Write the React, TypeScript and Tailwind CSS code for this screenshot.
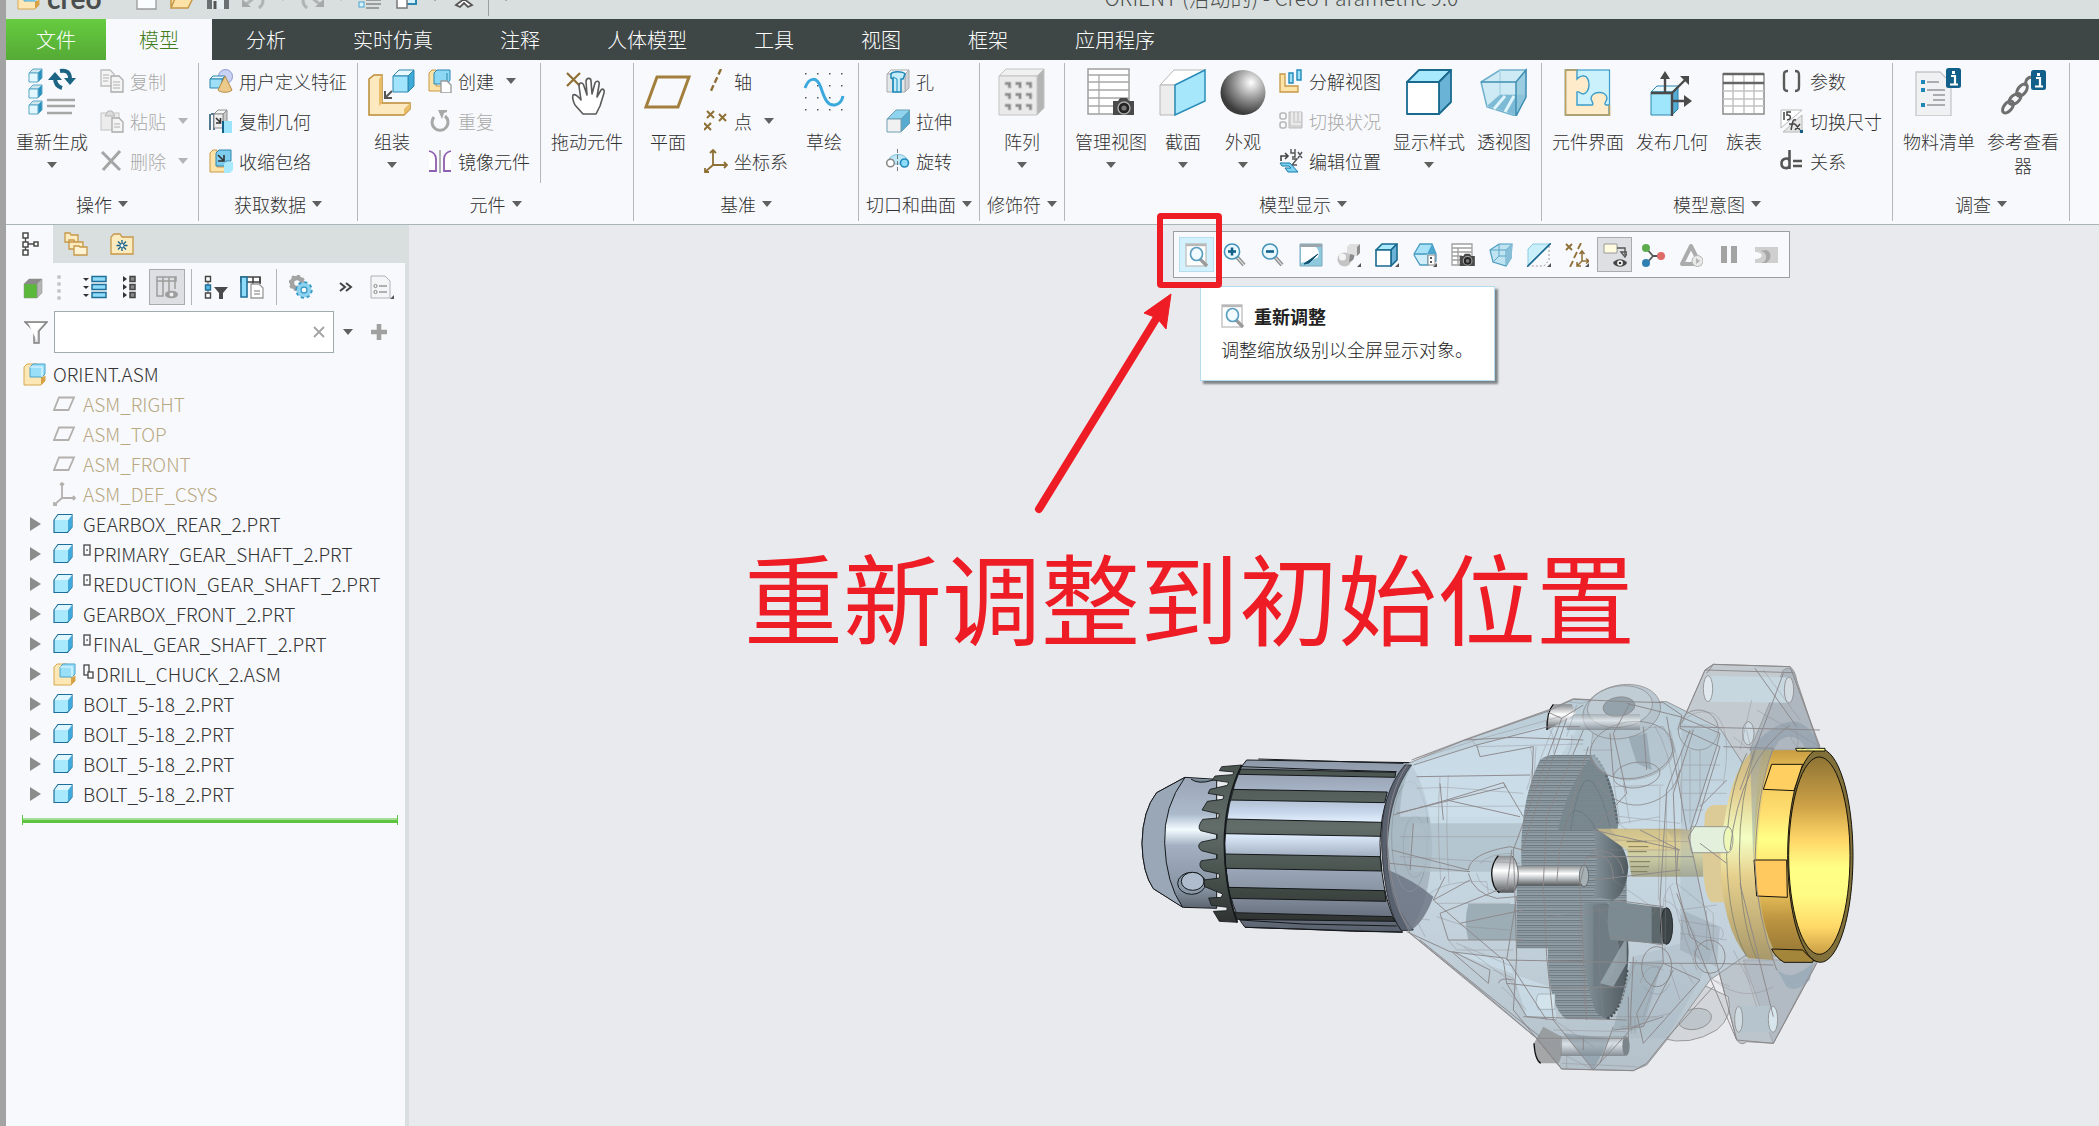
import type { ReactNode } from "react";
import { clsx } from "clsx";

/* ---------- drawing helpers ---------- */

type BoxProps = {
  x: number;
  y: number;
  w: number;
  h: number;
  d: number;
  front?: string;
  top?: string;
  side?: string;
  stroke?: string;
  sw?: number;
};

function Box({ x, y, w, h, d, front = "#a8e6fb", top = "#e8f9ff", side = "#3fa9d8", stroke = "#2b87b0", sw = 1 }: BoxProps) {
  return (
    <g stroke={stroke} strokeWidth={sw} strokeLinejoin="round">
      <path d={`M${x} ${y + d}l${d} ${-d}h${w}l${-d} ${d}z`} fill={top} />
      <path d={`M${x + w} ${y + d}l${d} ${-d}v${h}l${-d} ${d}z`} fill={side} />
      <rect x={x} y={y + d} width={w} height={h} fill={front} />
    </g>
  );
}

function Svg({ s = 24, children }: { s?: 12 | 24 | 48; children: ReactNode }) {
  return (
    <svg
      viewBox={`0 0 ${s} ${s}`}
      className={clsx("shrink-0", s === 48 ? "h-12 w-12" : s === 24 ? "h-6 w-6" : "h-3 w-3")}
      fill="none"
      aria-hidden
    >
      {children}
    </svg>
  );
}

function Caret({ muted }: { muted?: boolean }) {
  return (
    <svg viewBox="0 0 10 6" className={clsx("h-[6px] w-[10px] shrink-0", muted ? "text-[#b4b4b4]" : "text-[#606060]")} aria-hidden>
      <path d="M0 0h10L5 6z" fill="currentColor" />
    </svg>
  );
}

const Page = ({ x, y, w, h, c = "#9a9a9a", f = "#f4f4f4" }: { x: number; y: number; w: number; h: number; c?: string; f?: string }) => (
  <path d={`M${x} ${y}h${w - 4}l4 4v${h - 4}h${-w}z`} fill={f} stroke={c} strokeWidth="1.3" />
);

const Camera = ({ x, y }: { x: number; y: number }) => (
  <g transform={`translate(${x} ${y})`}>
    <path d="M1 4h5l2-3h7l2 3h5v14H1z" fill="#4a4a4a" />
    <circle cx="12" cy="11" r="6" fill="#222" stroke="#aaa" strokeWidth="1.4" />
    <circle cx="12" cy="11" r="2.6" fill="#777" />
  </g>
);

const Lens = ({ glyph }: { glyph?: "+" | "-" }) => (
  <g>
    <path d="M14 14l7 8" stroke="#8d8d8d" strokeWidth="4" />
    <path d="M14 14l7 8" stroke="#d9d9d9" strokeWidth="1.4" />
    <circle cx="9" cy="8.5" r="7.6" fill="#e9f8fe" stroke="#4593b8" strokeWidth="1.5" />
    {glyph && <path d="M5 8.5h8" stroke="#12608a" strokeWidth="2.6" />}
    {glyph === "+" && <path d="M9 4.500v8" stroke="#12608a" strokeWidth="2.6" />}
  </g>
);

const Refit = () => (
  <Svg>
    <rect x="1" y="1" width="20" height="22" fill="#fff" stroke="#c2c2c2" strokeWidth="1.4" />
    <path d="M1 2h20" stroke="#b8b8b8" strokeWidth="2.4" />
    <path d="M15 16l7 7" stroke="#9b9b9b" strokeWidth="3.4" />
    <ellipse cx="11.5" cy="11" rx="6" ry="6.5" fill="#f2fbff" stroke="#5a9fc0" strokeWidth="1.7" />
  </Svg>
);

const AsmIcon = () => (
  <Svg>
    <path d="M1 5l3-3h10v12h8v5l-4 4H1z" fill="#fde7b4" stroke="#d8a850" />
    <path d="M18 23l4-4v-4h-4z" fill="#d8a246" />
    <path d="M7 5l3-3h12v10l-3 3H7z" fill="#9adff8" stroke="#4aa3cc" />
    <path d="M7 5h12v10" stroke="#e6f8ff" strokeWidth="1.2" />
  </Svg>
);

const PartIcon = () => (
  <Svg>
    <path d="M1 8l4-5.500h14v12.500l-4.500 5.500H1z" fill="#a8e9fd" stroke="#1d6f99" strokeWidth="1.200" />
    <path d="M15 8l4-5v12L15 20z" fill="#41a9dc" />
    <path d="M1.500 8l4-5h13.500L15 8z" fill="#ddf6ff" />
  </Svg>
);

const TreePlane = () => (
  <Svg>
    <path d="M6 5.500h15L15.500 18H1z" stroke="#b3b0ae" strokeWidth="1.800" />
  </Svg>
);

const TreeCsys = () => (
  <Svg>
    <path d="M9 1v15h13M9 16l-8 7M7 3l2-2 2 2M20 14l2 2-2 2M1 20v3h3" stroke="#b3b0ae" strokeWidth="1.800" />
  </Svg>
);

/* ---------- ribbon icons, large ---------- */

const RegenerateBig = () => (
  <Svg s={48}>
    {[2, 18, 34].map((y) => (
      <Box key={y} x={1} y={y - 1} w={9} h={9} d={4} front="#e3f7fe" top="#cfe6ef" side="#2a8fbf" stroke="#5aa7c6" />
    ))}
    <path d="M34 20Q27 18 27 10M32 3q10-2 10 8" stroke="#1c6483" strokeWidth="4" />
    <path d="M20 12h14l-7-8zM36 10h12l-6 7z" fill="#1c6483" />
    <path d="M19 32h28M19 38h28M19 45h25" stroke="#a6a6a6" strokeWidth="2.400" />
  </Svg>
);

const AssembleBig = () => (
  <Svg s={48}>
    <path d="M1 11l5-4h8v28h28v6l-6 6H1z" fill="#fde9bf" stroke="#bb8a35" strokeWidth="1.500" />
    <path d="M11 11l3-4v28l-3 3zM36 41l6-6v6l-6 6z" fill="#e9bd68" />
    <Box x={25} y={2} w={15} h={16} d={6} front="#a2e4fb" />
    <path d="M24 23l-6 6M17 23v7h7" stroke="#555" strokeWidth="2" />
  </Svg>
);

const DragBig = () => (
  <Svg s={48}>
    <path d="M4 5l13 13M17 5L4 18" stroke="#8e6f35" strokeWidth="2.200" />
    <path
      d="M20 46l-8-9c-2-4-3-7-2-10 3-2 5 2 8 5l-2-14c0-4 4-4 5 0l3 9-1-14c1-4 5-3 5 0l1 13 3-11c2-3 5-2 4 2l-2 12 4-7c2-2 4 0 3 3l-4 13-4 8z"
      fill="#fff"
      stroke="#5a5a5a"
      strokeWidth="1.600"
      strokeLinejoin="round"
    />
  </Svg>
);

const PlaneBig = () => (
  <Svg s={48}>
    <path d="M13 9h32L34 39H2z" stroke="#a37f3e" strokeWidth="3" />
  </Svg>
);

const SketchBig = () => (
  <Svg s={48}>
    {[5, 17, 29, 41].map((y) => [5, 17, 29, 41].map((x) => <rect key={`${x}-${y}`} x={x} y={y} width="1.500" height="1.500" fill="#555" />))}
    <path d="M5 20C9 9 17 8 21 20s7 18 14 17c5-1 7-4 8-9" stroke="#3ba9dd" strokeWidth="3" />
  </Svg>
);

const PatternBig = () => (
  <Svg s={48}>
    <Box x={1} y={1} w={38} h={39} d={7} front="#e9eae9" top="#f0f0f0" side="#b4b4b4" stroke="#c3c3c3" />
    {[14, 25, 36].map((y) => [7, 17.500, 28].map((x) => (
      <path key={`${x}-${y}`} d={`M${x} ${y}h6v6h-3v-3h-3z`} fill="#8b8b8b" stroke="#c4c4c4" />
    )))}
  </Svg>
);

const ManageViewBig = () => (
  <Svg s={48}>
    <rect x="1" y="1" width="41" height="45" fill="#fff" stroke="#9f9f9f" strokeWidth="1.500" />
    <path d="M1 7h41M1 14h41M1 22h41M1 30h41M1 38h41M12 7v39" stroke="#a8a8a8" strokeWidth="1.300" />
    <Camera x={25} y={29} />
  </Svg>
);

const SectionBig = () => (
  <Svg s={48}>
    <path d="M1 17L15 2h31L16 17z" fill="#fff" stroke="#b8b8b8" />
    <path d="M1 17h15v30H1z" fill="#ececec" stroke="#b8b8b8" />
    <path d="M16 17L46 2v31L16 47z" fill="#a6e7fc" stroke="#2a8cb7" strokeWidth="1.500" />
  </Svg>
);

const AppearanceBig = () => (
  <Svg s={48}>
    <defs>
      <radialGradient id="ball" cx=".68" cy=".28" r=".7">
        <stop offset="0" stopColor="#fff" />
        <stop offset=".5" stopColor="#9a9a9a" />
        <stop offset="1" stopColor="#3c3c3c" />
      </radialGradient>
    </defs>
    <circle cx="24" cy="24.500" r="22.500" fill="url(#ball)" />
  </Svg>
);

const DisplayStyleBig = () => (
  <Svg s={48}>
    <Box x={2} y={2} w={32} h={32} d={12} front="#fff" top="#a8e9fd" side="#6ab3d6" stroke="#1a6a8f" sw={1.800} />
  </Svg>
);

const PerspectiveBig = () => (
  <Svg s={48}>
    <path d="M1 14L20 2h26l-1 28-9 18-29-9z" fill="#cdeaf5" stroke="#6fb0cc" strokeWidth="1.500" />
    <path d="M20 2v25L7 39M20 27h25" stroke="#a8d3e4" strokeWidth="1.300" />
    <path d="M20 27h25l-9 20-29-9z" fill="#7dbad5" />
    <path d="M25 28L14 41M34 28L25 44" stroke="#dff3fa" strokeWidth="3" />
    <path d="M36 14l10-12v28L36 48z" fill="#8ec5db" opacity=".8" />
    <path d="M1 14h35L46 2v27L36 48V14" stroke="#3f8fb2" strokeWidth="1.500" />
  </Svg>
);

const InterfaceBig = () => (
  <Svg s={48}>
    <rect x="1.500" y="2" width="44" height="45" fill="#cbf1fd" stroke="#3c9cc8" strokeWidth="1.200" />
    <path
      d="M1.500 2H13v9c4-4 5-3 7-3 3 0 5 4 5 9s-3 9-6 9-3-3-6-2v13h15c2 0 0-4-1-6 0-8 15-9 16-1 0 3-4 6-1 7h3v10H1.500z"
      fill="#fdebca"
      stroke="#3c9cc8"
      strokeWidth="1.400"
    />
    <path d="M13 2H1.500v45h44V37" stroke="#c79f55" strokeWidth="1.500" />
  </Svg>
);

const PublishBig = () => (
  <Svg s={48}>
    <Box x={3} y={18} w={21} h={23} d={6} front="#9fe5fb" side="#55add4" />
    <path d="M3 25h21v23M24 25L38 11M17 25V6M24 33h17" stroke="#4a4a4a" strokeWidth="2.400" />
    <path d="M12 11l5-8 5 8zM32 8h9v9zM36 27l8 6-8 6z" fill="#4a4a4a" />
  </Svg>
);

const FamilyTableBig = () => (
  <Svg s={48}>
    <rect x="3" y="6" width="41" height="40" fill="#fff" stroke="#8b8b8b" strokeWidth="1.500" />
    <path d="M13 7v38M24 7v38M34 7v38M3 23h41M3 31h41M3 38h41" stroke="#c2c2c2" strokeWidth="1.500" />
    <path d="M3 6h41M3 15h41" stroke="#666" strokeWidth="2.400" />
  </Svg>
);

const Info = ({ x, y }: { x: number; y: number }) => (
  <g transform={`translate(${x} ${y})`}>
    <rect width="15" height="20" rx="2.500" fill="#12608a" />
    <path d="M5 8h4v8M4 16.500h8" stroke="#fff" strokeWidth="2.200" />
    <rect x="6" y="3" width="3" height="3" fill="#fff" />
  </g>
);

const BomBig = () => (
  <Svg s={48}>
    <path d="M1 4h24l11 11v33H1z" fill="#f0f1f2" stroke="#c3c6c8" strokeWidth="1.300" />
    <path d="M12 14h12M12 22h18M18 27h12M18 32h12M12 37h18" stroke="#a9adb0" strokeWidth="1.800" />
    <path d="M6 12h4v4H6zM6 20h4v4H6zM6 35h4v4H6z" fill="#1f86b8" />
    <Info x={31} y={0} />
  </Svg>
);

const RefViewerBig = () => (
  <Svg s={48}>
    <g stroke="#6f6f6f" strokeWidth="3">
      <ellipse cx="9" cy="39" rx="4" ry="7" transform="rotate(40 9 39)" />
      <ellipse cx="16" cy="31" rx="4" ry="7" transform="rotate(50 16 31)" />
      <ellipse cx="23" cy="22" rx="4" ry="7" transform="rotate(38 23 22)" />
      <path d="M27 18c-1-4 0-8 5-9" />
    </g>
    <Info x={32} y={2} />
  </Svg>
);

/* ---------- ribbon icons, small ---------- */

const CopyIcon = () => (
  <Svg>
    <Page x={1} y={1} w={13} h={16} c="#bcbcbc" />
    <Page x={11} y={7} w={12} h={16} c="#ababab" />
    <path d="M3 6h6M3 9h6M3 12h5M13 13h7M13 16h7M13 19h7" stroke="#b0b0b0" />
  </Svg>
);

const PasteIcon = () => (
  <Svg>
    <rect x="1" y="4" width="18" height="17" fill="#ececec" stroke="#c3c3c3" />
    <path d="M5 7l3-5h4l3 5z" fill="#dcdcdc" stroke="#b5b5b5" />
    <Page x={12} y={9} w={11} h={14} c="#ababab" />
    <path d="M14 15h6M14 18h6" stroke="#b0b0b0" />
  </Svg>
);

const DeleteIcon = () => (
  <Svg>
    <path d="M2 3l18 18M20 2L3 21" stroke="#a5a5a5" strokeWidth="3" />
  </Svg>
);

const UdfIcon = () => (
  <Svg>
    <circle cx="16.500" cy="7.500" r="7" fill="#c9d1f5" stroke="#8c98cf" />
    <Box x={1} y={7} w={12} h={9} d={3} front="#9edff7" />
    <path d="M16 7l7 14c-2 3-12 3-14 0z" fill="#ecca8b" stroke="#b48b45" />
  </Svg>
);

const CopyGeomIcon = () => (
  <Svg>
    <path d="M1 5v16M2 5h3v16" stroke="#2a5a72" strokeWidth="1.600" />
    <Box x={5} y={1} w={9} h={14} d={4} front="#eee" top="#f6f6f6" side="#c9c9c9" stroke="#8d8d8d" />
    <path d="M7 9l4 4M11.500 9v5H7" stroke="#333" strokeWidth="1.600" />
    <path d="M14 12h9v12h-9z" fill="#9ce4fb" />
    <path d="M14 12v12" stroke="#12608a" strokeWidth="2" />
  </Svg>
);

const ShrinkIcon = () => (
  <Svg>
    <path d="M1 4l3-3h4v17h9v5H1z" fill="#fde3a7" stroke="#c69848" />
    <path d="M7 4l3-3h12v11h-5v5H7z" fill="#7dcdee" stroke="#3185ae" />
    <path d="M9 6l5 5M15 6v6H9" stroke="#333" strokeWidth="1.600" />
    <path d="M15 15l2-2h7v8l-3 3h-6z" fill="#a8e9fd" />
  </Svg>
);

const CreateIcon = () => (
  <Svg>
    <path d="M1 4l3-3h4v16h9v5H1z" fill="#fde3a7" stroke="#c69848" />
    <path d="M6 4l3-3h13v10l-3 4H6z" fill="#8cd8f5" stroke="#2b87b0" />
    <path d="M19 4v11" stroke="#2b87b0" />
    <Page x={13} y={12} w={10} h={12} f="#fff" />
  </Svg>
);

const RepeatIcon = () => (
  <Svg>
    <path d="M17 7A8 8 0 1 1 6 8" stroke="#a8a8a8" strokeWidth="3" />
    <path d="M10 1h9v2l-3 1-2 6z" fill="#a8a8a8" />
  </Svg>
);

const MirrorIcon = () => (
  <Svg>
    <path d="M1 2v20h7V10c0-4-3-7-7-8zM23 2v20h-7V10c0-4 3-7 7-8z" fill="#fff" />
    <path d="M1 2c4 1 7 4 7 8v12H1M23 2c-4 1-7 4-7 8v12h7" stroke="#8e5fb0" strokeWidth="1.800" />
    <path d="M12 1v23" stroke="#999" strokeWidth="1.500" />
  </Svg>
);

const AxisIcon = () => (
  <Svg>
    <path d="M17 0L6 24" stroke="#8e6f35" strokeWidth="2.400" strokeDasharray="6 3" />
  </Svg>
);

const PointIcon = () => (
  <Svg>
    <path d="M3 2l7 7M10 2L3 9M15 5l7 7M22 5l-7 7M0 14l7 7M7 14l-7 7" stroke="#8e6f35" strokeWidth="2" />
  </Svg>
);

const CsysIcon = () => (
  <Svg>
    <path d="M9 1v15h14M9 16l-8 7M6 4l3-3 3 3M20 13l3 3-3 3M1 19v4h4" stroke="#8e6f35" strokeWidth="1.800" />
  </Svg>
);

const HoleIcon = () => (
  <Svg>
    <Box x={1} y={1} w={18} h={18} d={4} front="#e4e7e8" top="#fafafa" side="#cfd3d5" stroke="#a9adaf" />
    <path d="M5 5c1-3 12-3 14 0l-2 5h-2v13H7V10L5 9z" fill="#c4edfb" stroke="#2089b9" strokeWidth="1.500" />
    <path d="M7 23V8l4 2v13" stroke="#2089b9" />
  </Svg>
);

const ExtrudeIcon = () => (
  <Svg>
    <Box x={1} y={1} w={14} h={13} d={9} front="#f1f1f1" top="#8fd4ee" side="#57abd0" stroke="#6f9fb3" />
  </Svg>
);

const RevolveIcon = () => (
  <Svg>
    <path d="M3 10C6 4 18 4 21 10l-3 5H6z" fill="#bfe9f8" stroke="#7cbfda" />
    <circle cx="4.500" cy="14" r="3.800" fill="#fff" stroke="#888" strokeWidth="1.500" />
    <circle cx="18.500" cy="14" r="4" fill="#8fdcfa" stroke="#2089b9" strokeWidth="1.600" />
    <path d="M11.500 0v24" stroke="#777" strokeDasharray="4 2" />
  </Svg>
);

const ExplodeIcon = () => (
  <Svg>
    <path d="M1 5h5v12h13v6H1z" fill="#fde3a7" stroke="#c69848" strokeWidth="1.300" />
    <path d="M10 4h4v10h-4zM18 1h4v10h-4z" fill="#9fe0f8" stroke="#2089b9" strokeWidth="1.400" />
  </Svg>
);

const ToggleStatusIcon = () => (
  <Svg>
    <rect x="1" y="4" width="6" height="6" rx="2" stroke="#b5b5b5" strokeWidth="1.500" />
    <rect x="1" y="13" width="6" height="6" rx="2" stroke="#b5b5b5" strokeWidth="1.500" />
    <path d="M10 3h13v16H10z" fill="#d4d4d4" stroke="#bcbcbc" />
    <path d="M13 3v12h9M17 3v9M21 3v9" stroke="#f0f0f0" strokeWidth="1.500" />
  </Svg>
);

const EditPosIcon = () => (
  <Svg>
    <path d="M2 12V7h7M6 4l3 3-3 3" stroke="#444" strokeWidth="1.600" />
    <path d="M12 0v4h4M16 0v8h-3M19 3l4 6M23 3l-4 6M13 10h5l-5 6h5" stroke="#555" strokeWidth="1.400" />
    <path d="M1 14h10l8 9H9l-3-4h6l-2-2H3z" fill="#7fd3f2" stroke="#1779a8" />
  </Svg>
);

const ParamsIcon = () => (
  <Svg>
    <path d="M8 2C4 2 4 4 4 6v11c0 3 0 5 4 5M15 2c4 0 4 2 4 4v11c0 3 0 5-4 5" stroke="#5a5a5a" strokeWidth="2.400" />
  </Svg>
);

const SwitchDimIcon = () => (
  <Svg>
    <path d="M1 19V1h21z" fill="#fff" stroke="#b8b8b8" />
    <path d="M3 23L22 6v17z" fill="#e6e6e6" stroke="#b8b8b8" />
    <path d="M4 3v8M11 3H7v3c4-1 5 5 0 5M16 11c-4-1-3 2-5 10M9 15h6M15 15l5 6M20 15l-5 6" stroke="#444" strokeWidth="1.500" />
    <rect x="20" y="21" width="3" height="3" fill="#12608a" />
  </Svg>
);

const RelationsIcon = () => (
  <Svg>
    <path d="M9.500 1v19M9.500 12c-1-4-8-3-8 2.500s7 6 8 2M13 12h9M13 17h9" stroke="#555" strokeWidth="2.600" />
  </Svg>
);

/* ---------- ribbon pieces ---------- */

type Cmd = { label: string; icon: ReactNode; caret?: boolean; off?: boolean; wrap?: boolean };

function BigButton({ label, icon, caret, wrap }: Cmd) {
  return (
    <button type="button" className="flex flex-col items-center px-[6px] pt-2">
      {icon}
      <span className={clsx("mt-[13px] leading-6", wrap ? "w-[72px]" : "whitespace-nowrap")}>{label}</span>
      {caret && (
        <span className="mt-[9px]">
          <Caret />
        </span>
      )}
    </button>
  );
}

function SmallStack({ items }: { items: Cmd[] }) {
  return (
    <div className="flex flex-col pt-px">
      {items.map((it) => (
        <button
          key={it.label}
          type="button"
          disabled={it.off}
          className={clsx("flex h-10 items-center gap-[6px] px-[6px] whitespace-nowrap", it.off && "text-[#a9a9a9]")}
        >
          {it.icon}
          {it.label}
          {it.caret && (
            <span className="ml-[6px] flex">
              <Caret muted={it.off} />
            </span>
          )}
        </button>
      ))}
    </div>
  );
}

const Sep = () => <div className="my-[3px] w-px shrink-0 bg-[#b3b8ba]" />;

function Group({ title, children }: { title: string; children: ReactNode }) {
  return (
    <>
      <section className="flex shrink-0 flex-col px-1" aria-label={title}>
        <div className="flex h-[129px] justify-center">{children}</div>
        <button type="button" className="flex h-[30px] items-center justify-center gap-[6px] px-[3px] whitespace-nowrap">
          {title}
          <Caret />
        </button>
      </section>
      <Sep />
    </>
  );
}

function Ribbon() {
  return (
    <div className="flex h-[165px] overflow-hidden border-b border-[#a9b5b8] bg-[#f8f9fc] text-[18px] text-[#303030]">
      <Group title="操作">
        <BigButton label="重新生成" icon={<RegenerateBig />} caret />
        <SmallStack
          items={[
            { label: "复制", icon: <CopyIcon />, off: true },
            { label: "粘贴", icon: <PasteIcon />, off: true, caret: true },
            { label: "删除", icon: <DeleteIcon />, off: true, caret: true },
          ]}
        />
      </Group>
      <Group title="获取数据">
        <SmallStack
          items={[
            { label: "用户定义特征", icon: <UdfIcon /> },
            { label: "复制几何", icon: <CopyGeomIcon /> },
            { label: "收缩包络", icon: <ShrinkIcon /> },
          ]}
        />
      </Group>
      <Group title="元件">
        <BigButton label="组装" icon={<AssembleBig />} caret />
        <SmallStack
          items={[
            { label: "创建", icon: <CreateIcon />, caret: true },
            { label: "重复", icon: <RepeatIcon />, off: true },
            { label: "镜像元件", icon: <MirrorIcon /> },
          ]}
        />
        <div className="mx-1 mt-[3px] mb-[6px] w-px bg-[#b3b8ba]" />
        <BigButton label="拖动元件" icon={<DragBig />} />
      </Group>
      <Group title="基准">
        <BigButton label="平面" icon={<PlaneBig />} />
        <SmallStack
          items={[
            { label: "轴", icon: <AxisIcon /> },
            { label: "点", icon: <PointIcon />, caret: true },
            { label: "坐标系", icon: <CsysIcon /> },
          ]}
        />
        <BigButton label="草绘" icon={<SketchBig />} />
      </Group>
      <Group title="切口和曲面">
        <SmallStack
          items={[
            { label: "孔", icon: <HoleIcon /> },
            { label: "拉伸", icon: <ExtrudeIcon /> },
            { label: "旋转", icon: <RevolveIcon /> },
          ]}
        />
      </Group>
      <Group title="修饰符">
        <BigButton label="阵列" icon={<PatternBig />} caret />
      </Group>
      <Group title="模型显示">
        <BigButton label="管理视图" icon={<ManageViewBig />} caret />
        <BigButton label="截面" icon={<SectionBig />} caret />
        <BigButton label="外观" icon={<AppearanceBig />} caret />
        <SmallStack
          items={[
            { label: "分解视图", icon: <ExplodeIcon /> },
            { label: "切换状况", icon: <ToggleStatusIcon />, off: true },
            { label: "编辑位置", icon: <EditPosIcon /> },
          ]}
        />
        <BigButton label="显示样式" icon={<DisplayStyleBig />} caret />
        <BigButton label="透视图" icon={<PerspectiveBig />} />
      </Group>
      <Group title="模型意图">
        <BigButton label="元件界面" icon={<InterfaceBig />} />
        <BigButton label="发布几何" icon={<PublishBig />} />
        <BigButton label="族表" icon={<FamilyTableBig />} />
        <SmallStack
          items={[
            { label: "参数", icon: <ParamsIcon /> },
            { label: "切换尺寸", icon: <SwitchDimIcon /> },
            { label: "关系", icon: <RelationsIcon /> },
          ]}
        />
      </Group>
      <Group title="调查">
        <BigButton label="物料清单" icon={<BomBig />} />
        <BigButton label="参考查看器" icon={<RefViewerBig />} wrap />
      </Group>
    </div>
  );
}

/* ---------- title bar and tabs ---------- */

function TitleBar() {
  return (
    <header className="flex h-[19px] items-start overflow-hidden bg-[#d9dfde]">
      <div className="-mt-[23px] grid h-[42px] w-full grid-cols-[12fr_auto_7fr] items-center text-[21px] text-[#4a4f4e]">
        <div className="flex items-center gap-3 pl-[11px] text-[#7d8281]">
          <AsmIcon />
          <span className="-ml-[6px] mr-5 font-['Lato',sans-serif] text-[28px] font-bold leading-8 text-[#4a4f4e]">creo</span>
          <Svg>
            <Page x={3} y={1} w={19} h={22} f="#fafdff" />
          </Svg>
          <Svg>
            <path d="M1 22V4h8l2 3h9v4M1 22l5-12h18l-6 12z" fill="#fde3a7" stroke="#c69848" strokeWidth="1.500" />
          </Svg>
          <Svg>
            <path d="M1 1h22v22H1z" fill="#6a6f71" />
            <path d="M5 1h14v9H5zM6 14h12v9H6z" fill="#e6eef2" />
            <path d="M9 15v8" stroke="#555" strokeWidth="3" />
          </Svg>
          <Svg>
            <path d="M2 20L12 12c9-4 12 4 5 10" stroke="#b0b5b4" strokeWidth="3" />
            <path d="M0 13v8h9z" fill="#a5aaa9" />
          </Svg>
          <Caret muted />
          <Svg>
            <path d="M22 20L12 12C3 8 0 16 7 22" stroke="#b0b5b4" strokeWidth="3" />
            <path d="M24 13v8h-9z" fill="#a5aaa9" />
          </Svg>
          <Caret muted />
          <Svg>
            <path d="M8 14h15M8 18h15M8 22h13" stroke="#9a9f9e" strokeWidth="2" />
            <rect x="1" y="16" width="5" height="5" fill="#d6f3fd" stroke="#4aa3cc" />
          </Svg>
          <Svg>
            <rect x="8" y="3" width="14" height="15" fill="#d6f3fd" stroke="#2b87b0" strokeWidth="2" />
            <rect x="3" y="13" width="10" height="9" fill="#fff" stroke="#777" strokeWidth="1.500" />
          </Svg>
          <Caret />
          <Svg>
            <path d="M4 19l8-6 8 6-4 2-4-4-4 4z" fill="#fff" stroke="#555" strokeWidth="1.800" />
          </Svg>
          <div className="h-9 w-px bg-[#9aa09f]" />
          <Caret />
        </div>
        <h1 className="whitespace-nowrap font-light">ORIENT (活动的) - Creo Parametric 9.0</h1>
        <div />
      </div>
    </header>
  );
}

const TABS = ["模型", "分析", "实时仿真", "注释", "人体模型", "工具", "视图", "框架", "应用程序"];

function TabBar() {
  return (
    <nav className="flex h-[41px] bg-[#3e4646] text-[20px] text-white">
      <button type="button" className="bg-linear-to-b from-[#66cc40] to-[#55aa35] px-[30px]">
        文件
      </button>
      <div className="flex gap-px" role="tablist">
        {TABS.map((t, i) => (
          <button
            key={t}
            type="button"
            role="tab"
            aria-selected={i === 0}
            className={clsx("px-[33px] whitespace-nowrap", i === 0 && "bg-[#f8f9fc] text-[#3f7d20]")}
          >
            {t}
          </button>
        ))}
      </div>
    </nav>
  );
}

/* ---------- model tree ---------- */

type Node = { name: string; kind: "plane" | "csys" | "part" | "asm"; mark?: "single" | "double" };

const NODES: Node[] = [
  { name: "ASM_RIGHT", kind: "plane" },
  { name: "ASM_TOP", kind: "plane" },
  { name: "ASM_FRONT", kind: "plane" },
  { name: "ASM_DEF_CSYS", kind: "csys" },
  { name: "GEARBOX_REAR_2.PRT", kind: "part" },
  { name: "PRIMARY_GEAR_SHAFT_2.PRT", kind: "part", mark: "single" },
  { name: "REDUCTION_GEAR_SHAFT_2.PRT", kind: "part", mark: "single" },
  { name: "GEARBOX_FRONT_2.PRT", kind: "part" },
  { name: "FINAL_GEAR_SHAFT_2.PRT", kind: "part", mark: "single" },
  { name: "DRILL_CHUCK_2.ASM", kind: "asm", mark: "double" },
  { name: "BOLT_5-18_2.PRT", kind: "part" },
  { name: "BOLT_5-18_2.PRT", kind: "part" },
  { name: "BOLT_5-18_2.PRT", kind: "part" },
  { name: "BOLT_5-18_2.PRT", kind: "part" },
];

const NODE_ICONS = { plane: <TreePlane />, csys: <TreeCsys />, part: <PartIcon />, asm: <AsmIcon /> };

function TreeRow({ node }: { node: Node }) {
  const datum = node.kind === "plane" || node.kind === "csys";
  return (
    <li className={clsx("flex h-[30px] items-center whitespace-nowrap", datum ? "text-[#b8a983]" : "text-[#353535]")}>
      <span className="flex w-[29px] justify-start pl-[6px]">
        {!datum && (
          <svg viewBox="0 0 11 14" className="h-[14px] w-[11px]" aria-hidden>
            <path d="M0 0l11 7-11 7z" fill="#8c8c8c" />
          </svg>
        )}
      </span>
      {NODE_ICONS[node.kind]}
      <span className="flex items-center pl-[6px]">
        {node.mark === "single" && (
          <svg viewBox="0 0 10 20" className="h-5 w-[10px]" fill="none" aria-hidden>
            <rect x="1" y="1" width="6" height="10" stroke="#444" strokeWidth="1.300" />
            <rect x="3.300" y="5.300" width="1.500" height="1.500" fill="#444" />
          </svg>
        )}
        {node.mark === "double" && (
          <svg viewBox="0 0 13 20" className="h-5 w-[13px]" fill="none" aria-hidden>
            <rect x="1" y="1" width="5" height="10" stroke="#444" strokeWidth="1.300" />
            <rect x="5" y="8" width="5" height="6" fill="#fff" stroke="#444" strokeWidth="1.300" />
          </svg>
        )}
        {node.name}
      </span>
    </li>
  );
}

const ToolBtn = ({ label, on, children }: { label: string; on?: boolean; children: ReactNode }) => (
  <button
    type="button"
    aria-label={label}
    className={clsx("flex h-9 w-9 shrink-0 items-center justify-center", on && "border border-[#a9abad] bg-[#dedfe2]")}
  >
    {children}
  </button>
);

function Sidebar() {
  return (
    <aside className="flex w-[403px] shrink-0 flex-col border-r-4 border-[#d9dfde] bg-[#f8f9fc]">
      <div className="flex h-[38px] bg-[#d9dfde]" role="tablist">
        <button type="button" role="tab" aria-selected aria-label="模型树" className="flex w-[47px] items-center bg-[#f8f9fc] pl-4">
          <Svg>
            <path d="M3.500 4v16M4 12h11" stroke="#4a4a4a" strokeWidth="1.300" />
            <path d="M1 1h5v5H1zM1 10h5v5H1zM1 18h5v5H1zM12 10h4v4h-4z" fill="#fff" stroke="#4a4a4a" strokeWidth="1.500" />
          </Svg>
        </button>
        <button type="button" role="tab" aria-selected={false} aria-label="文件夹浏览器" className="flex w-[46px] items-center justify-center">
          <Svg>
            <path d="M1 1h5l1 2h7v7H1zM5 8h5l1 2h8v7H5z" fill="#fdebc0" stroke="#c69848" strokeWidth="1.300" />
            <path d="M10 14h5l1 1h7v8H10z" fill="#fff3d4" stroke="#c69848" strokeWidth="1.300" />
          </Svg>
        </button>
        <button type="button" role="tab" aria-selected={false} aria-label="收藏夹" className="flex w-[46px] items-center justify-center">
          <Svg>
            <path d="M1 22V5l3-3h6l2 3h11v17z" fill="#fdebc0" stroke="#c69848" strokeWidth="1.300" />
            <path d="M12 8v11M6.500 13.500h11M8 9.500l8 8M16 9.500l-8 8" stroke="#12608a" strokeWidth="1.300" />
            <circle cx="12" cy="13.500" r="1.500" fill="#fff" />
          </Svg>
        </button>
      </div>

      <div className="mt-[6px] flex h-9 items-center pr-[5px] pl-4">
        <Svg>
          <Box x={2} y={4} w={13} h={14} d={5} front="#5cb83a" top="#8a8a8a" side="#b5b5b5" stroke="#8f8f8f" sw={0.500} />
        </Svg>
        <span className="mr-[6px] ml-[5px] flex w-5 flex-col items-start gap-[3px] pl-[6px]">
          {[0, 1, 2, 3].map((n) => (
            <i key={n} className="h-[4px] w-[4px] rounded-full bg-[#c5c8ca]" />
          ))}
        </span>
        <ToolBtn label="全部展开">
          <Svg>
            {[2, 10, 18].map((y) => (
              <g key={y}>
                <path d={`M0 ${y + 1}h6l-3 3z`} fill="#333" />
                <rect x="9" y={y - 0.500} width="14" height="5" fill="#8fdcfa" stroke="#1f6f97" strokeWidth="1.500" />
              </g>
            ))}
          </Svg>
        </ToolBtn>
        <ToolBtn label="全部折叠">
          <Svg>
            {[2, 10, 18].map((y) => (
              <g key={y}>
                <path d={`M4 ${y - 1}v6l4-3z`} fill="#333" />
                <rect x="11" y={y - 0.500} width="5" height="5" fill="#888" stroke="#444" strokeWidth="1.500" />
              </g>
            ))}
          </Svg>
        </ToolBtn>
        <ToolBtn label="树列" on>
          <Svg>
            <path d="M2 2h19v4H2zM2 2v19h6V2M14 2v14M20 2v12" stroke="#9d9d9d" strokeWidth="1.500" />
            <ellipse cx="16.500" cy="19.500" rx="6.500" ry="3.800" fill="#9d9d9d" />
            <circle cx="16.500" cy="19.500" r="2" fill="#eee" />
          </Svg>
        </ToolBtn>
        <div className="mx-[6px] h-9 w-px bg-[#b3b5b7]" />
        <ToolBtn label="树过滤器">
          <Svg>
            <path d="M4 5v14" stroke="#555" />
            <path d="M1.500 1.500h5v5h-5zM1.500 18h5v5h-5z" fill="#fff" stroke="#444" strokeWidth="1.400" />
            <path d="M1.500 10h5v5h-5z" fill="#5bb8e2" stroke="#1f6f97" strokeWidth="1.400" />
            <path d="M10 12h14l-5 6v6h-4v-6z" fill="#4a4a4a" />
          </Svg>
        </ToolBtn>
        <ToolBtn label="列显示">
          <Svg>
            <path d="M1 2h19v5H1z" fill="#fff" stroke="#444" strokeWidth="1.600" />
            <path d="M1 2h6v20H1z" fill="#8fdcfa" stroke="#1f6f97" strokeWidth="1.600" />
            <path d="M13 2v9M20 2v7" stroke="#444" strokeWidth="1.600" />
            <Page x={11} y={9} w={12} h={14} f="#fff" />
            <path d="M14 16h6M14 19h6" stroke="#777" />
          </Svg>
        </ToolBtn>
        <div className="mx-[6px] h-9 w-px bg-[#b3b5b7]" />
        <ToolBtn label="设置">
          <Svg>
            <circle cx="8" cy="8" r="5" stroke="#a3a3a3" strokeWidth="4.500" />
            <circle cx="8" cy="8" r="7.300" stroke="#a3a3a3" strokeWidth="2" strokeDasharray="3 2.700" />
            <circle cx="15" cy="15" r="5.500" fill="#fff" stroke="#8bd3f0" strokeWidth="4" />
            <circle cx="15" cy="15" r="7.800" stroke="#3a9ac6" strokeWidth="1.800" strokeDasharray="3.300 2.800" />
            <circle cx="15" cy="15" r="3" stroke="#3a9ac6" strokeWidth="1.400" />
          </Svg>
        </ToolBtn>
        <div className="flex-1" />
        <ToolBtn label="更多">
          <Svg>
            <path d="M6 8l5 4-5 4M12 8l5 4-5 4" stroke="#444" strokeWidth="2" />
          </Svg>
        </ToolBtn>
        <ToolBtn label="树设置">
          <Svg>
            <path d="M1 1h14l5 5v17H1z" fill="#f3f5f6" stroke="#b0b3b5" />
            <path d="M9 11h8M9 17h8" stroke="#999" strokeWidth="1.500" />
            <circle cx="5.500" cy="11" r="1.600" stroke="#888" />
            <circle cx="5.500" cy="17" r="1.600" stroke="#888" />
            <path d="M24 20v4h-4z" fill="#555" />
          </Svg>
        </ToolBtn>
      </div>

      <div className="mt-[6px] flex h-[42px] items-center pl-[18px]">
        <Svg>
          <path d="M1 2h22l-8 9v12h-5V11z" fill="#d9dadb" stroke="#7e7e7e" strokeWidth="1.400" />
          <path d="M4 3h16l-7 8v10" fill="#fff" />
        </Svg>
        <div className="ml-[6px] flex h-[42px] w-[280px] items-center border border-[#9fadb0] bg-white">
          <input type="text" aria-label="搜索模型树" className="h-full min-w-0 flex-1 px-2 text-[18px] outline-none" />
          <button type="button" aria-label="清除" className="mr-2 flex">
            <Svg s={12}>
              <path d="M1 1l10 10M11 1L1 11" stroke="#a3a3a3" strokeWidth="1.800" />
            </Svg>
          </button>
        </div>
        <button type="button" aria-label="搜索选项" className="ml-[9px] flex">
          <Caret />
        </button>
        <button type="button" aria-label="添加" className="ml-4 flex">
          <Svg>
            <path d="M10 4v16M2 12h16" stroke="#a0a0a0" strokeWidth="4.600" />
          </Svg>
        </button>
      </div>

      <div className="mt-[6px] pl-[17px] text-[19px] leading-[30px]">
        <div className="flex h-[30px] items-center gap-[6px] text-[#353535]">
          <AsmIcon />
          ORIENT.ASM
        </div>
        <ul className="pl-px">
          {NODES.map((n, i) => (
            <TreeRow key={i} node={n} />
          ))}
        </ul>
      </div>
      <div className="mt-[6px] mr-[7px] ml-4 flex h-[10px] items-center border-x border-[#5cc43f]">
        <div className="h-[5px] flex-1 border-t-2 border-[#a6df97] bg-[#5cc43f]" />
      </div>
    </aside>
  );
}

/* ---------- in-graphics toolbar ---------- */

const Corner = () => <path d="M24 20v4h-4z" fill="#555" />;

const VIEW_TOOLS: { label: string; on?: boolean; hot?: boolean; art: ReactNode }[] = [
  { label: "重新调整", hot: true, art: <Refit /> },
  { label: "放大", art: <Svg><Lens glyph="+" /></Svg> },
  { label: "缩小", art: <Svg><Lens glyph="-" /></Svg> },
  {
    label: "重画",
    art: (
      <Svg>
        <path d="M1 1h22v22H1z" fill="#8fc9de" stroke="#7ba9bb" />
        <path d="M2 4h15c3 3 4 8 1 11L2 20z" fill="#fff" />
        <path d="M1 2.500h22" stroke="#9aa6ac" strokeWidth="3" />
        <path d="M19 11l-9 9-5 1z" fill="#12506f" stroke="#12506f" />
      </Svg>
    ),
  },
  {
    label: "渲染选项",
    art: (
      <Svg>
        <path d="M10 4l3-3h10v9l-3 3H10z" fill="#dedede" />
        <path d="M20 4l3-3v9l-3 3z" fill="#8d8d8d" />
        <circle cx="7.500" cy="16.500" r="7" fill="#c4c4c4" />
        <circle cx="5.500" cy="14" r="3.500" fill="#f4f4f4" />
        <path d="M12 19c4-1 6-4 5-7l-4-1z" fill="#8a8a8a" />
        <Corner />
      </Svg>
    ),
  },
  {
    label: "显示样式",
    art: (
      <Svg>
        <Box x={1} y={1} w={15} h={16} d={6} front="#fff" top="#a8e9fd" side="#6ab3d6" stroke="#1a6a8f" sw={1.600} />
        <Corner />
      </Svg>
    ),
  },
  {
    label: "已保存方向",
    art: (
      <Svg>
        <path d="M1 11L7 1h12l4 10v7H7z" fill="#a8e2f8" stroke="#4a9cc0" strokeWidth="1.300" />
        <path d="M19 1l4 10h-9z" fill="#4da6cd" />
        <path d="M1 11h13M1 12l6 10h8V12" fill="#cfeefa" stroke="#4a9cc0" strokeWidth="1.300" />
        <rect x="15" y="12" width="7" height="10" fill="#fff" stroke="#888" />
        <path d="M18 14v2M18 18v2" stroke="#555" strokeWidth="2" />
        <Corner />
      </Svg>
    ),
  },
  {
    label: "视图管理器",
    art: (
      <Svg>
        <path d="M1 1h20v21H1zM1 5h20M1 9h20M1 13h10M1 17h10M7 5v17" fill="#fff" stroke="#a0a0a0" strokeWidth="1.300" />
        <g transform="translate(8 10) scale(.72)">
          <Camera x={0} y={0} />
        </g>
      </Svg>
    ),
  },
  {
    label: "透视图",
    art: (
      <Svg>
        <path d="M1 7l9-6h13l-1 14-5 8-13-4z" fill="#bfe3f1" stroke="#4a9cc0" strokeWidth="1.200" />
        <path d="M10 1v12l-6 6M10 13h12M1 7h16l6-6M17 7v16" stroke="#5ba6c6" />
        <path d="M17 7l6-6v14l-6 8z" fill="#86bfd7" />
      </Svg>
    ),
  },
  {
    label: "截面",
    art: (
      <Svg>
        <path d="M1 6l5-5h16L1 22z" fill="#c9effb" stroke="#8ccbe2" />
        <path d="M22 3v14l-5 6H3" stroke="#9a9a9a" strokeDasharray="2 2" />
        <path d="M24 0L0 24" stroke="#1a6a8f" strokeWidth="1.600" />
        <Corner />
      </Svg>
    ),
  },
  {
    label: "基准显示过滤器",
    art: (
      <Svg>
        <path d="M1 1l6 6M7 1L1 7M16 0l-3 6M12 9l-3 6M8 18l-3 6" stroke="#8e6f35" strokeWidth="1.800" />
        <path d="M17 8v10h7M17 18l-5 5M14.500 11l2.500-3 2.500 3M21 15.500l3 2.500-3 2.500M12 19v4h4" stroke="#8e6f35" strokeWidth="1.500" />
        <Corner />
      </Svg>
    ),
  },
  {
    label: "注释显示",
    on: true,
    art: (
      <Svg>
        <path d="M1 1h13v9H1z" fill="#fffbe0" stroke="#9a9a9a" />
        <path d="M14 5h8v7M18 9l4 5 3-5z" stroke="#555" strokeWidth="1.400" />
        <path d="M10 20c3-5 11-5 14 0-3 5-11 5-14 0z" fill="#444" />
        <circle cx="17" cy="20" r="2.800" fill="#fff" />
        <circle cx="17" cy="20" r="1.300" fill="#333" />
      </Svg>
    ),
  },
  {
    label: "旋转中心",
    art: (
      <Svg>
        <path d="M5 5l7 8M12 13l-6 7M12 13h7" stroke="#555" strokeWidth="1.800" />
        <circle cx="5" cy="5" r="4" fill="#5cab4e" />
        <circle cx="5" cy="20" r="4" fill="#2f7fb0" />
        <circle cx="20" cy="13" r="4" fill="#e06a66" />
      </Svg>
    ),
  },
  {
    label: "仿真",
    art: (
      <Svg>
        <path d="M12 3l9 18H3z" stroke="#ababab" strokeWidth="4" strokeLinejoin="round" />
        <circle cx="18.500" cy="18" r="5.500" fill="#e9e9e9" stroke="#b5b5b5" />
        <path d="M17 15l4 3-4 3z" fill="#b5b5b5" />
      </Svg>
    ),
  },
  { label: "暂停", art: <Svg><path d="M4 3h6v17H4zM14 3h6v17h-6z" fill="#a3a3a3" /></Svg> },
  {
    label: "裁剪",
    art: (
      <Svg>
        <path d="M0 4h23v16H0v-4c9 0 9-7 0-7z" fill="#cfcfcf" />
        <path d="M5 8c8 0 8 11 1 12h5c6-3 6-12 0-13z" fill="#a8a8a8" />
      </Svg>
    ),
  },
];

function ViewToolbar() {
  return (
    <div className="absolute top-[6px] left-[764px] flex gap-[3px] border border-[#9b9fa2] bg-[#f8f9fc] p-[5px]" role="toolbar">
      {VIEW_TOOLS.map((t, i) => (
        <button
          key={i}
          type="button"
          aria-label={t.label}
          className={clsx(
            "flex h-[35px] w-[35px] items-center justify-center",
            t.hot && "border border-[#b5dff0] bg-[#d3f1fc]",
            t.on && "border border-[#a9abad] bg-[#dedfe2]",
          )}
        >
          {t.art}
        </button>
      ))}
    </div>
  );
}

/* ---------- drill model ---------- */

const BANDS = [
  "M332 87L797 97 795 112 326 103z",
  "M300 148L772 156 764 188 295 180z",
  "M287 237L755 247 752 289 285 281z",
  "M284 342L750 350 755 393 287 385z",
  "M293 442L764 452 768 484 299 475z",
  "M310 518L786 530 795 544 320 538z",
];

const TEETH =
  "M335 75L275 80 268 92 312 96 308 104 255 108 247 120 296 127 292 136 240 148 234 160 282 168 278 178 232 184 216 210 268 222 266 234 218 238Q200 262 212 272L262 284 262 296 214 306Q198 318 214 332L262 344 262 356 214 362Q202 378 222 392L268 402 268 414 222 420 224 440 278 462 274 472 236 474 244 496 292 502 290 512 250 514 268 544 322 547Q240 310 335 75z";

const WIRES = [
  "M95 330L255 270 500 185 580 148 740 155 850 158 905 195",
  "M100 345L290 285 505 230 600 230",
  "M255 270L400 262 610 270",
  "M40 495L200 450 370 398 378 410 50 490",
  "M200 450L420 500M370 398L430 500M110 380L450 375M460 290L455 420",
  "M35 600L265 660M30 640L270 665M265 660Q270 610 390 590L430 600",
  "M265 670Q280 730 350 745L410 740M160 750L270 690M160 750L240 820 370 930",
  "M80 845L210 905 380 925 500 1110",
  "M90 850L300 1020 470 1165 545 1257 760 1262 800 1240",
  "M120 870L330 1040 480 1160M215 905L325 1000 330 960 220 905",
  "M180 790L205 870 430 870M180 790L380 710M240 820L430 780",
  "M370 930L380 1000 440 1100 530 1110M355 1000Q360 980 400 990",
  "M410 740L380 930M395 600L380 720M545 205L400 600 405 740 410 920 400 1080 545 1257",
  "M560 205L425 600M610 240L500 500 490 700 500 920 520 1110 640 1260",
  "M500 185L545 205 610 165M625 290L540 590 530 700",
  "M740 430L650 530M740 160L900 200 1020 250 1010 290 930 540",
  "M905 195L900 235 1020 290M930 240L860 420 840 750 850 940 960 990",
  "M940 240L880 430 890 700 930 860 990 900",
  "M1020 290L950 520 925 560 940 620 1000 900 1070 1170 1180 1180 1310 940",
  "M900 230L1320 240M1030 290L1180 295M905 220L975 60 1000 43 1230 50 1320 290",
  "M975 60L1240 68M1000 43L980 70M1125 55L1250 230M1210 70L1080 420",
  "M960 470L1040 390M1040 640L960 580M1080 700L1180 1100M1070 1170L980 960 890 730",
  "M640 540L900 600M620 620L940 620M640 690L900 660M780 540L895 598 890 660",
  "M850 940L770 1090 790 1180 960 990M880 960L790 1130 700 1140",
  "M700 750L850 770M690 860L850 885M380 930L620 935 850 940 1000 940 1180 945",
  "M380 1000L520 1015 740 1010M430 1100L740 1110M470 1165L740 1165",
  "M640 1260L760 1130 850 1100M800 1240L860 1165 1000 1010",
  "M610 1160V1200M700 1130L660 1240M745 1040V1170M760 920L750 1130",
  "M620 620L600 700 610 920 620 1110M640 600Q720 600 730 670M630 610Q700 610 700 690",
  "M750 160L700 250 740 430M790 230L800 360M690 250L700 380M860 200L920 540",
  "M180 400L190 510M195 680L160 750M100 520L90 660M290 285L300 320 460 290",
];

/* thinner inner facets of the castings */
const FACETS = [
  "M105 325L270 262 510 178M130 322L275 274 540 200M270 262L290 290 610 282",
  "M180 380Q170 520 182 690M205 375Q195 520 207 700M110 415L200 412 430 430M120 470L440 468",
  "M60 560L420 560M60 620L420 640M450 290Q470 340 440 420M468 290L460 420",
  "M290 670Q300 715 350 725M300 640Q330 610 400 610M150 730Q200 690 320 695L325 730",
  "M170 760L390 760M170 800L260 830 390 840M205 870L230 900 400 900M230 880L400 950M250 890L400 1000",
  "M105 800L135 860M85 830Q110 800 150 810M340 960L400 985 410 1020M365 1010L440 1080",
  "M560 155L605 160 640 150M590 165L560 260M610 300L700 300M520 230L480 330",
  "M890 240Q930 170 1000 190 1060 230 1030 400M920 260Q960 200 1010 240",
  "M905 300V520M930 300V520M960 300V470M905 345H1020M905 390H1030M905 430H1040M905 480H970",
  "M870 240Q900 340 905 450M825 230Q870 300 880 420M700 390L720 520 840 500M730 400L750 520",
  "M650 500Q700 470 720 520M660 520Q700 500 740 540M680 495L900 520M700 570L930 575M690 600L895 600",
  "M700 410L850 405M840 410L835 750M860 430L855 900M870 710L900 820 950 960M890 700L1000 790",
  "M900 780L1010 765M895 810L1010 830M900 850L1040 870M980 780V900M1000 790V900M1020 830Q1040 850 1020 870",
  "M930 830Q960 860 940 930M850 750Q920 770 905 870M880 700Q850 720 850 770M830 780L690 910",
  "M780 1000Q800 930 850 960M790 1010Q840 1060 870 1000M760 940L840 950 790 1100M770 930L700 1100",
  "M870 960L900 1050M900 940L940 1000M940 900L1000 990 1050 1010M1000 990Q1090 1060 1180 1010",
  "M720 1130H775M725 1138H770M755 1100V1150M765 1100V1150M700 1100L830 1100M790 1110L870 1090",
  "M530 1115L640 1190M545 1210L640 1260 700 1180M545 1240L770 1250M520 1140L740 1145M560 1257V1215",
  "M1100 240L1120 330M1060 260L1110 300M1115 150L1080 300M1130 180L1320 290M1150 60L1260 210",
  "M1230 255Q1240 290 1270 300M1245 235Q1260 270 1250 300M1090 940L1130 1070M1060 900L1110 1000",
  "M505 800L680 780M620 780L830 770M600 760Q590 920 620 1100M660 765Q650 920 670 1100",
  "M505 230Q530 270 520 310M575 255Q580 290 560 320M700 690L830 780M640 755L690 830",
];

const DrillModel = () => (
  <svg viewBox="0 0 2220 1290" className="absolute top-[425px] left-[721px] h-[430px] w-[740px]" fill="none" aria-label="ORIENT.ASM">
    <defs>
      <linearGradient id="nose" x1="0" y1="0" x2="0" y2="1">
        <stop offset="0" stopColor="#9ba6b7" />
        <stop offset=".28" stopColor="#abb9cc" />
        <stop offset=".4" stopColor="#f2fcff" />
        <stop offset=".52" stopColor="#a3b0c2" />
        <stop offset=".85" stopColor="#8793a2" />
        <stop offset="1" stopColor="#5b646f" />
      </linearGradient>
      <linearGradient id="barrel" x1="0" y1="0" x2="0" y2="1">
        <stop offset="0" stopColor="#8d98a8" />
        <stop offset=".2" stopColor="#a9b6c9" />
        <stop offset=".3" stopColor="#c6d5ea" />
        <stop offset=".36" stopColor="#e3f0fe" />
        <stop offset=".44" stopColor="#dce9fb" />
        <stop offset=".55" stopColor="#a6b3c5" />
        <stop offset=".75" stopColor="#8a95a5" />
        <stop offset="1" stopColor="#565d6a" />
      </linearGradient>
      <linearGradient id="band" x1="0" y1="60" x2="0" y2="560" gradientUnits="userSpaceOnUse">
        <stop offset="0" stopColor="#47514c" />
        <stop offset=".4" stopColor="#626c69" />
        <stop offset=".7" stopColor="#47514c" />
        <stop offset="1" stopColor="#2c302f" />
      </linearGradient>
      <linearGradient id="gold" x1="0" y1="0" x2="0" y2="1">
        <stop offset="0" stopColor="#c79c42" />
        <stop offset=".12" stopColor="#f1c65c" />
        <stop offset=".3" stopColor="#ffe070" />
        <stop offset=".42" stopColor="#ffff86" />
        <stop offset=".6" stopColor="#ffd96a" />
        <stop offset=".8" stopColor="#bd9440" />
        <stop offset="1" stopColor="#8f7234" />
      </linearGradient>
      <linearGradient id="bore" x1="0" y1="0" x2="0" y2="1">
        <stop offset="0" stopColor="#8f7434" />
        <stop offset=".25" stopColor="#cda247" />
        <stop offset=".42" stopColor="#ffd768" />
        <stop offset=".56" stopColor="#ffff86" />
        <stop offset=".7" stopColor="#fffb84" />
        <stop offset=".86" stopColor="#ffd968" />
        <stop offset="1" stopColor="#c89d45" />
      </linearGradient>
      <linearGradient id="paleGold" x1="0" y1="0" x2="0" y2="1">
        <stop offset="0" stopColor="#c9b582" />
        <stop offset=".2" stopColor="#e3cf90" />
        <stop offset=".42" stopColor="#f3ffc4" />
        <stop offset=".6" stopColor="#e6d08d" />
        <stop offset="1" stopColor="#a8986a" />
      </linearGradient>
      <linearGradient id="spindle" x1="0" y1="0" x2="0" y2="1">
        <stop offset="0" stopColor="#b9ae86" />
        <stop offset=".3" stopColor="#d9cc98" />
        <stop offset=".55" stopColor="#cfd0a6" />
        <stop offset="1" stopColor="#a5a68c" />
      </linearGradient>
      <linearGradient id="shell" x1="0" y1="0" x2="0" y2="1">
        <stop offset="0" stopColor="#b9cbd5" />
        <stop offset=".35" stopColor="#c9dbe6" />
        <stop offset=".6" stopColor="#c3d2dc" />
        <stop offset="1" stopColor="#b4c1ca" />
      </linearGradient>
      <linearGradient id="pin" x1="0" y1="0" x2="0" y2="1">
        <stop offset="0" stopColor="#888d90" />
        <stop offset=".4" stopColor="#fff" />
        <stop offset=".6" stopColor="#c9cdd0" />
        <stop offset="1" stopColor="#55595b" />
      </linearGradient>
      <linearGradient id="gearFace" x1="0" y1="0" x2="1" y2="0">
        <stop offset="0" stopColor="#84929a" />
        <stop offset="1" stopColor="#4f5a5f" />
      </linearGradient>
      <pattern id="cogs" width="60" height="15" patternUnits="userSpaceOnUse">
        <rect width="60" height="15" fill="#919ea6" />
        <path d="M0 2h60" stroke="#5f6b72" strokeWidth="2.500" />
        <path d="M0 8h60" stroke="#77848b" strokeWidth="3" />
      </pattern>
    </defs>

    {/* chuck */}
    <g transform="translate(0 270)" stroke="#15181b" strokeWidth="3" strokeLinejoin="round">
      <path d="M80 158L165 112 260 118V505L160 502 70 446Q38 400 36 310 38 210 80 158z" fill="url(#nose)" />
      <path d="M80 158L165 112Q100 200 104 310 108 430 158 502L70 446Q38 400 36 310 38 210 80 158z" fill="#9aa7b7" />
      <path d="M183 117Q205 135 250 120" fill="#71858f" />
      <ellipse cx="185" cy="430" rx="42" ry="33" fill="#8b98a8" />
      <ellipse cx="188" cy="424" rx="34" ry="27" fill="#aebccd" />
      <path d="M350 60L850 68Q752 140 750 310 755 500 818 577L345 562Q290 500 283 310 285 130 350 60z" fill="url(#barrel)" />
      {BANDS.map((d) => (
        <path key={d} d={d} fill="url(#band)" />
      ))}
      <path d="M385 57L520 61 670 66 820 70M335 80L560 88 800 95M330 540L520 552 800 558M345 562L525 568 670 574 815 576" />
      <path d={TEETH} fill="url(#band)" strokeWidth="2.500" />
      <path d="M335 75Q284 180 283 310 285 450 322 547" strokeWidth="5" />
    </g>

    <g transform="translate(750 0)">
      {/* flange and housing body */}
      <g stroke="#8b8a8c" strokeWidth="2.500" strokeLinejoin="round">
        <path d="M905 220L975 60 1000 43 1230 50Q1245 60 1250 90L1320 300 1180 960 960 900z" fill="#c3cbd1" />
        <path d="M1210 60Q1240 40 1250 100L1320 300 1110 300z" fill="#a9b3bb" opacity=".8" />
        <path d="M1000 900L1070 1170Q1085 1190 1100 1175L1180 1180 1315 930z" fill="#bdc5cc" />
        <path d="M1310 930L1180 1180Q1150 1100 1090 930z" fill="#aab4bc" opacity=".55" />
        <path d="M845 1165Q930 1190 1010 1140 1060 1100 1045 1040L960 1000z" fill="#d2d6da" />
        <ellipse cx="945" cy="1107" rx="50" ry="31" fill="#bfc6cb" transform="rotate(-12 945 1107)" />
        <path d="M85 340L255 270 505 180 580 146 740 155 860 155 1020 235 1140 420 1120 900 990 990 860 1170 800 1245 760 1262 545 1257 470 1165 90 850Q25 740 22 580 30 420 85 340z" fill="url(#shell)" />
        <path d="M975 110V150Q980 160 990 155L1230 158V82L990 78Q975 85 975 110z" fill="#c6d7e0" strokeWidth="0" />
        <ellipse cx="984" cy="116" rx="14" ry="39" fill="#e0e9ee" />
        <ellipse cx="1227" cy="120" rx="14" ry="39" fill="#d3dce1" />
        <path d="M1075 1068H1180V1147H1075z" fill="#b6c5cd" strokeWidth="0" />
        <ellipse cx="1076" cy="1108" rx="12" ry="39" fill="#cfdae0" />
        <ellipse cx="1179" cy="1108" rx="14" ry="39" fill="#d7e5ec" />
        <ellipse cx="1105" cy="250" rx="17" ry="35" fill="#cddae2" />
      </g>

      {/* chuck back plate seen through the shell */}
      <path d="M75 345Q0 430 5 590 15 780 65 842L100 840Q15 740 22 580 30 430 95 345z" fill="#59606e" stroke="#23272b" strokeWidth="2.500" />
      <path d="M95 345Q150 430 157 590 150 760 90 842 15 740 22 580 30 430 95 345z" fill="#8f9eaa" opacity=".55" />
      <path d="M25 660Q100 690 160 740 135 810 95 840 40 770 25 660z" fill="#69717f" opacity=".8" />
      <ellipse cx="90" cy="560" rx="55" ry="165" stroke="#8a949b" strokeWidth="2" />
      <ellipse cx="105" cy="590" rx="35" ry="92" stroke="#97a3aa" strokeWidth="2" />
      <path d="M100 520H430V665H100Q75 590 100 520z" fill="#aebfc8" opacity=".75" />
      <path d="M100 340L500 225 590 240 430 500H60Q60 400 100 340z" fill="#cfe2ee" opacity=".55" />
      <path d="M215 905L385 925 440 1100 530 1110 520 1015z" fill="#cfe2ee" opacity=".6" />

      {/* shafts and gears */}
      <path d="M265 762H410V870H265Q250 815 265 762z" fill="#9dadb5" />
      <path d="M480 330Q500 315 520 315H640Q700 370 715 520L700 660H425Q415 460 480 330z" fill="url(#cogs)" />
      <path d="M640 315Q700 370 715 520L705 545 530 560Q560 400 640 315z" fill="#78868e" opacity=".9" />
      <path d="M640 315Q690 360 712 520" stroke="#5b676d" strokeWidth="7" strokeDasharray="7 5" />
      <path d="M550 560Q560 480 592 482 630 490 650 550M570 550Q600 350 640 400 670 440 690 530" stroke="#65727a" strokeWidth="2" />
      <path d="M410 690H740V895H410z" fill="url(#cogs)" />
      <path d="M540 540H680Q740 570 742 660 740 730 690 760H430V590z" fill="url(#cogs)" />
      <path d="M640 540Q735 560 745 650 740 730 700 750L640 740Q660 640 640 540z" fill="url(#gearFace)" />
      <path d="M500 760H680Q760 800 742 960 730 1080 680 1108H560Q515 1080 505 960z" fill="url(#cogs)" />
      <path d="M610 760H680Q760 800 742 960 730 1080 680 1108L650 1090Q600 980 610 760z" fill="url(#gearFace)" />
      <path d="M742 960Q730 1080 680 1108" stroke="#454f53" strokeWidth="8" strokeDasharray="7 5" />
      <path d="M640 765V1010Q700 1010 720 900L690 765z" fill="#6f7c83" />
      <path d="M660 1000L740 860V940L700 1010z" fill="#9dabb3" opacity=".8" />
      <path d="M690 752L860 775V883L690 870Q675 810 690 752z" fill="#7c8a91" />
      <path d="M815 770L860 775V883L815 878z" fill="#5d686d" />
      <ellipse cx="860" cy="828" rx="18" ry="55" fill="#3d4548" stroke="#1c1f21" strokeWidth="2.500" />

      {/* upper boss */}
      <g stroke="#8b8a8c" strokeWidth="2.500">
        <path d="M630 310Q650 380 740 390 860 385 885 300L850 230 640 240z" fill="#afbfc9" opacity=".6" />
        <path d="M745 260L800 250 815 360 770 340z" fill="#8798a2" opacity=".55" strokeWidth="0" />
        <ellipse cx="725" cy="185" rx="118" ry="80" fill="#b4c2cb" opacity=".85" transform="rotate(-12 725 185)" />
        <ellipse cx="720" cy="170" rx="98" ry="62" fill="#c3cfd6" opacity=".8" transform="rotate(-8 720 170)" />
        <ellipse cx="717" cy="170" rx="48" ry="29" fill="#93a2ab" transform="rotate(-8 717 170)" />
        <ellipse cx="755" cy="300" rx="125" ry="85" transform="rotate(-8 755 300)" />
        <ellipse cx="770" cy="375" rx="70" ry="38" transform="rotate(-8 770 375)" />
        <path d="M650 390Q700 470 780 465 880 450 900 360" />
        <ellipse cx="955" cy="240" rx="60" ry="60" />
      </g>

      {/* gold spindle and drum */}
      <path d="M650 536L900 536 970 545V680H755L740 600z" fill="url(#spindle)" />
      <path d="M690 536L860 540 900 600H750z" fill="#decd90" opacity=".6" />
      <path d="M740 575h60M745 590h60M745 605h55M750 635h60M752 650h55M752 665h50" stroke="#7d7b55" strokeWidth="3" />
      <path d="M975 490Q985 465 1005 465H1040V757H995Q970 740 968 620z" fill="#dccb96" />
      <path d="M1120 300L1180 300V930L1105 925Q1020 830 1022 610 1040 370 1120 300z" fill="url(#paleGold)" />
      <path d="M1100 310Q1040 430 1040 620 1045 820 1100 920M1125 302Q1078 440 1078 620 1082 820 1130 926" stroke="#7f8270" strokeWidth="2.500" />
      <path d="M935 530H1045V608H935Q925 570 935 530z" fill="#e3f0dc" stroke="#8b8a8c" strokeWidth="2.500" />
      <ellipse cx="1045" cy="569" rx="14" ry="38" fill="#eef9b8" stroke="#8b8a8c" strokeWidth="2.500" />
      <path d="M1150 301L1330 300 1320 935 1200 932Q1122 800 1122 620 1125 400 1150 301z" fill="url(#gold)" />
      <path d="M1150 301L1180 300Q1140 420 1130 620 1135 800 1190 932Q1122 800 1122 620 1125 400 1150 301z" fill="#d0c283" opacity=".5" />
      <g stroke="#15130a" strokeWidth="3" strokeLinejoin="round">
        <ellipse cx="1321" cy="617" rx="98" ry="320" fill="#82703a" />
        <ellipse cx="1318" cy="617" rx="92" ry="296" fill="url(#bore)" />
        <path d="M1175 343H1268L1242 422 1150 418z" fill="#ffcf62" />
        <path d="M1122 630H1220L1222 742 1130 738z" fill="#ffc960" />
        <path d="M1247 295H1335V303H1250z" fill="#ffff86" />
        <path d="M1175 897L1268 900Q1285 920 1300 930L1298 937H1212Q1185 920 1175 897z" fill="#a4863b" />
      </g>

      {/* bolts */}
      <g>
        <path d="M395 647H620V707H395z" fill="url(#pin)" />
        <path d="M395 617H350Q333 640 335 672 337 715 355 728H400Q415 710 415 672 412 630 395 617z" fill="url(#pin)" />
        <path d="M355 617Q335 640 335 672 337 715 358 728" stroke="#111" strokeWidth="4" />
        <path d="M395 617Q412 630 415 672 415 710 400 728" stroke="#555" strokeWidth="2.500" />
        <ellipse cx="612" cy="678" rx="14" ry="32" fill="#a6b0b5" stroke="#5d6568" strokeWidth="2.500" />
        <path d="M560 192H780V240H560z" fill="url(#pin)" opacity=".45" />
        <path d="M575 163H520Q500 185 500 240L560 210 587 190z" fill="url(#pin)" />
        <path d="M520 163Q500 185 501 240" stroke="#111" strokeWidth="4" />
        <path d="M540 1158H735V1218H540z" fill="url(#pin)" opacity=".5" />
        <path d="M462 1180Q465 1230 485 1240H535Q550 1220 545 1160L490 1130z" fill="#8e8f90" opacity=".75" />
        <path d="M462 1180Q465 1230 482 1240" stroke="#111" strokeWidth="4" />
        <ellipse cx="738" cy="1188" rx="11" ry="30" fill="#7b8488" />
        <path d="M475 1032H525V1078H475Q462 1055 475 1032z" fill="#d2e3eb" stroke="#97a3aa" strokeWidth="2" />
      </g>

      {/* glassy overlay and tessellation edges */}
      <path d="M1110 300Q1180 210 1250 215 1300 230 1320 295L1280 300Q1250 240 1200 270 1130 360 1120 640z" fill="#8697a3" opacity=".45" />
      <path d="M1180 940Q1200 980 1240 975 1280 960 1300 935L1290 990Q1250 1030 1220 1010z" fill="#8fa4b3" opacity=".6" />
      <path d="M905 220L1020 250 930 560 1000 900 960 990 860 1165 690 1165 760 920 900 880z" fill="#9fb0bb" opacity=".28" />
      <path d="M750 940L850 930 790 1130 700 1140z" fill="#8f9fa9" opacity=".4" />
      <path d="M905 780L1020 830 1010 950 900 900z" fill="#8c9ba5" opacity=".35" />
      <path d="M550 1150L690 1165 640 1260z" fill="#8494a0" opacity=".6" />
      <g stroke="#8b8789" strokeWidth="2" opacity=".55">
        {FACETS.map((d) => (
          <path key={d} d={d} />
        ))}
      </g>
      <g stroke="#8b8789" strokeWidth="2.800">
        {WIRES.map((d) => (
          <path key={d} d={d} />
        ))}
        <path d="M85 340Q20 430 22 580 30 740 90 850" />
        <ellipse cx="990" cy="920" rx="45" ry="50" />
        <ellipse cx="830" cy="950" rx="45" ry="60" />
        <path d="M1050 600Q1080 330 1230 225M1180 295Q1130 420 1125 640 1130 800 1190 960" />
      </g>
    </g>
  </svg>
);

/* ---------- annotations over the canvas ---------- */

function Callout() {
  return (
    <>
      <div
        className="absolute top-[61px] left-[791px] z-10 h-[95px] w-[295px] border border-[#b5dcee] bg-white pt-[17px] pl-5 text-[#222] shadow-[3px_3px_2px_#7f8587]"
        role="tooltip"
      >
        <div className="flex h-6 items-center gap-[9px] text-[18px] font-bold">
          <Refit />
          重新调整
        </div>
        <p className="mt-[9px] text-[18px] leading-6">调整缩放级别以全屏显示对象。</p>
      </div>
      <div className="absolute -top-[12px] left-[748px] z-20 h-[75px] w-[65px] rounded-[4px] border-[6px] border-[#ee1c25]" />
      <svg viewBox="0 0 140 222" className="absolute top-[67px] left-[625px] h-[222px] w-[140px]" aria-hidden>
        <path d="M5 217L122 27" stroke="#ee1c25" strokeWidth="8" strokeLinecap="round" />
        <path d="M137 2l-5 35-9-11-13-5z" fill="#ee1c25" stroke="#ee1c25" />
      </svg>
      <p className="absolute top-[296px] left-[335px] whitespace-nowrap text-[99px] font-normal leading-[148px] text-[#ee1c25]">
        重新调整到初始位置
      </p>
    </>
  );
}

export default function App() {
  return (
    <div className="flex min-h-screen flex-col border-l-6 border-[#a3a3a3] bg-[#e9eaee] font-['Noto_Sans_CJK_SC',sans-serif] font-light">
      <TitleBar />
      <TabBar />
      <Ribbon />
      <div className="flex flex-1">
        <Sidebar />
        <main className="relative min-w-0 flex-1">
          <DrillModel />
          <ViewToolbar />
          <Callout />
        </main>
      </div>
    </div>
  );
}
